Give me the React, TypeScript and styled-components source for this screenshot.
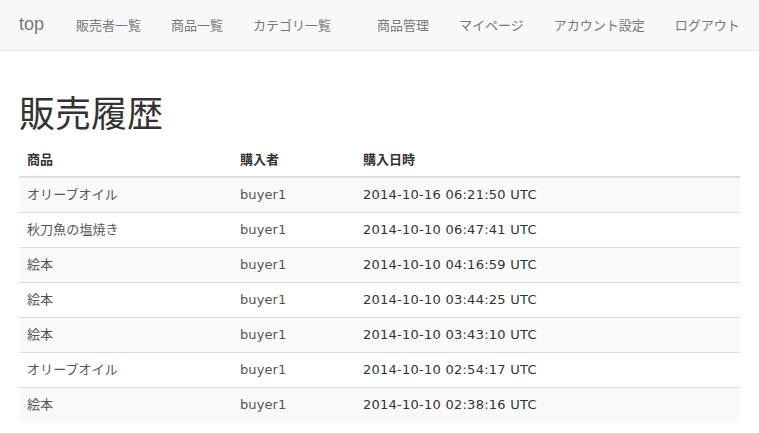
import React from "react";
import styled, { createGlobalStyle } from "styled-components";

const GlobalStyle = createGlobalStyle`
  html, body { margin: 0; padding: 0; background: #fff; }
  body {
    font-family: "DejaVu Sans", Verdana, "Noto Sans CJK JP", sans-serif;
    font-size: 13px;
    color: #333;
  }
  * { box-sizing: border-box; }
`;

const NavBar = styled.nav`
  height: 51px;
  background: #f8f8f8;
  border-bottom: 1px solid #e7e7e7;
  display: flex;
  align-items: stretch;
  padding-left: 6px;
`;

const Brand = styled.a`
  display: flex;
  align-items: center;
  padding: 0 17px 2px 13px;
  font-family: "Liberation Sans", Arial, sans-serif;
  font-size: 18px;
  color: #777;
  text-decoration: none;
`;

const NavGroup = styled.ul<{ $right?: boolean }>`
  list-style: none;
  margin: 0;
  padding: 0;
  display: flex;
  margin-left: ${(p) => (p.$right ? "16px" : "0")};
`;

const NavLink = styled.a`
  display: flex;
  align-items: center;
  height: 50px;
  padding: 0 15px 1px;
  font-family: "Noto Sans CJK JP", sans-serif;
  font-size: 13px;
  color: #777;
  text-decoration: none;
`;

const Container = styled.main`
  padding: 20px 19px 0;
`;

const Title = styled.h1`
  margin: 20px 0 11px;
  font-family: "Noto Sans CJK JP", sans-serif;
  font-weight: 400;
  font-size: 36px;
  line-height: 40px;
  color: #333;
`;

const Table = styled.table`
  width: 721px;
  border-collapse: collapse;
  border-spacing: 0;
`;

const Th = styled.th<{ $w: number }>`
  width: ${(p) => p.$w}px;
  text-align: left;
  padding: 8px 8px;
  line-height: 18px;
  font-family: "Noto Sans CJK JP", sans-serif;
  font-weight: 700;
  font-size: 13px;
  color: #333;
  border-bottom: 2px solid #ddd;
`;

const Row = styled.tr`
  &:nth-child(odd) { background: #f9f9f9; }
  & + & td { border-top: 1px solid #ddd; }
`;

const Td = styled.td<{ $dark?: boolean }>`
  padding: 8px 8px;
  line-height: 18px;
  font-size: 13px;
  letter-spacing: ${(p) => (p.$dark ? "0.25px" : "0.1px")};
  color: ${(p) => (p.$dark ? "#333" : "#555")};
  white-space: nowrap;
`;

const rows = [
  ["オリーブオイル", "buyer1", "2014-10-16 06:21:50 UTC"],
  ["秋刀魚の塩焼き", "buyer1", "2014-10-10 06:47:41 UTC"],
  ["絵本", "buyer1", "2014-10-10 04:16:59 UTC"],
  ["絵本", "buyer1", "2014-10-10 03:44:25 UTC"],
  ["絵本", "buyer1", "2014-10-10 03:43:10 UTC"],
  ["オリーブオイル", "buyer1", "2014-10-10 02:54:17 UTC"],
  ["絵本", "buyer1", "2014-10-10 02:38:16 UTC"],
];

export default function App() {
  return (
    <>
      <GlobalStyle />
      <NavBar>
        <Brand href="#">top</Brand>
        <NavGroup>
          {["販売者一覧", "商品一覧", "カテゴリ一覧"].map((t) => (
            <li key={t}>
              <NavLink href="#">{t}</NavLink>
            </li>
          ))}
        </NavGroup>
        <NavGroup $right>
          {["商品管理", "マイページ", "アカウント設定", "ログアウト"].map((t) => (
            <li key={t}>
              <NavLink href="#">{t}</NavLink>
            </li>
          ))}
        </NavGroup>
      </NavBar>
      <Container>
        <Title>販売履歴</Title>
        <Table>
          <thead>
            <tr>
              <Th $w={213}>商品</Th>
              <Th $w={123}>購入者</Th>
              <Th $w={385}>購入日時</Th>
            </tr>
          </thead>
          <tbody>
            {rows.map((r, i) => (
              <Row key={i}>
                <Td>{r[0]}</Td>
                <Td>{r[1]}</Td>
                <Td $dark>{r[2]}</Td>
              </Row>
            ))}
          </tbody>
        </Table>
      </Container>
    </>
  );
}
